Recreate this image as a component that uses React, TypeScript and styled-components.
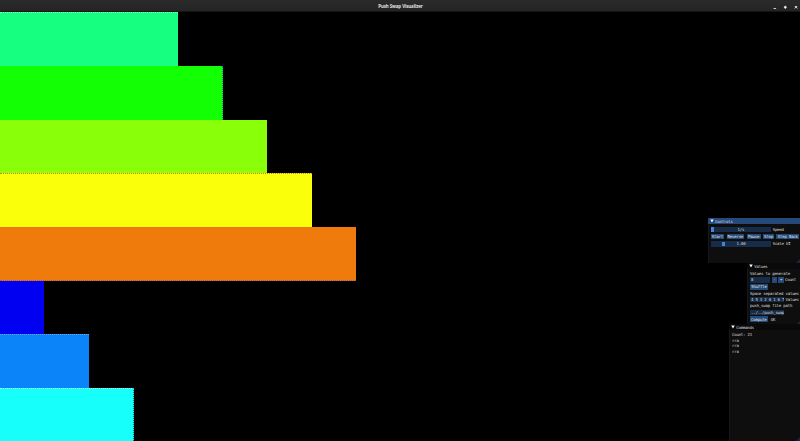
import React from 'react';
import styled, { createGlobalStyle, css } from 'styled-components';

const GlobalStyle = createGlobalStyle`
  * { box-sizing: border-box; }
  body { margin: 0; background: #000; overflow: hidden; }
`;

const Desktop = styled.div`
  position: relative;
  display: flex;
  flex-direction: column;
  width: 800px;
  height: 441px;
  overflow: hidden;
  background: #000;
`;

const TitleBar = styled.header`
  display: grid;
  grid-template-columns: 1fr auto 1fr;
  align-items: center;
  height: 12px;
  background: linear-gradient(#2b2b2b, #242424);
  border-bottom: 1px solid #151515;
  color: #e2e2e2;
  font: bold 4.4px/11px 'Noto Sans', sans-serif;
  letter-spacing: -0.06px;
`;

const Title = styled.span`
  grid-column: 2;
  padding: 1px 0 0 1px;
  white-space: nowrap;
`;

const WindowButtons = styled.svg`
  justify-self: end;
  width: 30px;
  height: 11px;
`;

const Stack = styled.main`
  display: flex;
  flex-direction: column;
`;

const Bar = styled.div<{ $w: number; $h: number; $color: string; $top?: string; $side?: string; $bottom?: string }>`
  width: ${p => p.$w}px;
  height: ${p => p.$h}px;
  background: ${p => p.$color};
  ${p => p.$top && css`border-top: 1px dotted ${p.$top};`}
  ${p => p.$side && css`border-right: 1px dotted ${p.$side};`}
  ${p => p.$bottom && css`border-bottom: 1px dotted ${p.$bottom};`}
`;

const Panel = styled.section<{ $x: number; $y: number; $h: number }>`
  position: absolute;
  left: ${p => p.$x}px;
  top: ${p => p.$y}px;
  right: 0;
  height: ${p => p.$h}px;
  background: #0e0e0e;
  box-shadow: inset 0.5px 0.5px #23232a;
  color: #dedede;
  font: 4px/5px 'DejaVu Sans Mono', monospace;
  letter-spacing: -0.19px;
  white-space: pre;
  overflow: hidden;
`;

const Header = styled.div<{ $active?: boolean }>`
  display: flex;
  align-items: center;
  gap: 1.3px;
  height: 6px;
  padding-left: 1.7px;
  background: ${p => (p.$active ? '#24497a' : '#090909')};
`;

const Arrow = styled.svg`
  width: 4px;
  height: 4px;
  fill: #fff;
`;

const Body = styled.div<{ $top: number; $gap: number }>`
  display: flex;
  flex-direction: column;
  gap: ${p => p.$gap}px;
  padding: ${p => p.$top}px 0 0 2.7px;
`;

const Row = styled.div<{ $gap?: number; $h?: number }>`
  display: flex;
  align-items: center;
  gap: ${p => p.$gap ?? 1.5}px;
  height: ${p => p.$h ?? 6}px;
`;

const Field = styled.div<{ $w: number; $center?: boolean }>`
  position: relative;
  flex: none;
  width: ${p => p.$w}px;
  height: 5.5px;
  padding-left: ${p => (p.$center ? 0 : 1)}px;
  background: #172c49;
  text-align: ${p => (p.$center ? 'center' : 'left')};
  overflow: hidden;
`;

const Grab = styled.i<{ $x: number }>`
  position: absolute;
  left: ${p => p.$x}px;
  top: 0.5px;
  width: 3px;
  height: 4.5px;
  background: #3e85df;
`;

const Button = styled.button<{ $w: number }>`
  flex: none;
  width: ${p => p.$w}px;
  height: 5.5px;
  padding: 0;
  border: 0;
  background: #234977;
  color: #e4e4e4;
  font: inherit;
  letter-spacing: inherit;
  text-align: center;
`;

const Line = styled.div<{ $h: number }>`
  height: ${p => p.$h}px;
  line-height: ${p => p.$h}px;
`;

const Grip = styled.svg`
  position: absolute;
  right: 0;
  bottom: 0;
  width: 4px;
  height: 4px;
  fill: #16283f;
`;

const bars: { w: number; h: number; color: string; top?: string; side?: string; bottom?: string }[] = [
  { w: 178, h: 54, color: '#16ff80', top: '#8affc0' },
  { w: 223, h: 54, color: '#12ff04', side: '#0a8f9c' },
  { w: 267, h: 53, color: '#8aff0a' },
  { w: 312, h: 54, color: '#faff0a', top: '#d07a20' },
  { w: 356, h: 54, color: '#ee7b0b', bottom: '#a05a70' },
  { w: 44, h: 53, color: '#0200f0' },
  { w: 89, h: 54, color: '#0b84fa', top: '#6aa4e0' },
  { w: 134, h: 53, color: '#16fffb', top: '#b0fff8', side: '#087d7c' },
];

const WindowHeader = ({ name, active }: { name: string; active?: boolean }) => (
  <Header $active={active}>
    <Arrow viewBox="0 0 4 4"><path d="M.3.5h3.4L2 3.6z" /></Arrow>
    {name}
  </Header>
);

const ResizeGrip = () => <Grip viewBox="0 0 4 4"><path d="M4 0v4H0z" /></Grip>;

export default function App() {
  return (
    <Desktop>
      <GlobalStyle />
      <TitleBar>
        <Title>Push Swap Visualizer</Title>
        <WindowButtons viewBox="0 0 30 11">
          <path d="M3.5 7.5h2.6" stroke="#ccc" strokeWidth="1" />
          <path d="M15.3 4.6l1.6 1.7-1.6 1.7-1.6-1.7z" fill="#eee" />
          <path d="M24.8 5l2.4 2.4m0-2.4l-2.4 2.4" stroke="#eee" strokeWidth="1" />
        </WindowButtons>
      </TitleBar>
      <Stack>
        {bars.map(b => (
          <Bar key={b.color} $w={b.w} $h={b.h} $color={b.color} $top={b.top} $side={b.side} $bottom={b.bottom} />
        ))}
      </Stack>

      <Panel $x={708} $y={218} $h={45}>
        <WindowHeader name="Controls" active />
        <Body $top={2.4} $gap={1.3}>
          <Row><Field $w={60.5} $center><Grab $x={0.7} />1/s</Field>Speed</Row>
          <Row $gap={2.7}>
            <Button $w={13.3}>Start</Button>
            <Button $w={17.3}>Reverse</Button>
            <Button $w={14}>Pause</Button>
            <Button $w={10.3}>Step</Button>
            <Button $w={23}>Step Back</Button>
          </Row>
          <Row><Field $w={60.5} $center><Grab $x={11.7} />1.00</Field>Scale UI</Row>
        </Body>
        <ResizeGrip />
      </Panel>

      <Panel $x={747.3} $y={263} $h={61.5}>
        <WindowHeader name="Values" />
        <Body $top={1.5} $gap={0.4}>
          <Row>Values to generate</Row>
          <Row $gap={1.3}>
            <Field $w={20.5}>8</Field>
            <Button $w={5.3}>-</Button>
            <Button $w={5.3}>+</Button>
            Count
          </Row>
          <Row $h={7}><Button $w={18}>Shuffle</Button></Row>
          <Row $h={5.5}>Space separated values</Row>
          <Row $gap={1}><Field $w={34.5}>4 5 3 2 0 1 6 7</Field>Values</Row>
          <Row>push_swap file path</Row>
          <Row><Field $w={34.5}>../../push_swap</Field></Row>
          <Row $h={7} $gap={3}><Button $w={17.7}>Compute</Button>OK</Row>
        </Body>
        <ResizeGrip />
      </Panel>

      <Panel $x={729.3} $y={324.4} $h={116.6}>
        <WindowHeader name="Commands" />
        <Body $top={2} $gap={0}>
          <Line $h={5.4}>Count: 21</Line>
          <Line $h={5.4}>rra</Line>
          <Line $h={5.4}>rra</Line>
          <Line $h={5.4}>rra</Line>
        </Body>
        <ResizeGrip />
      </Panel>
    </Desktop>
  );
}
